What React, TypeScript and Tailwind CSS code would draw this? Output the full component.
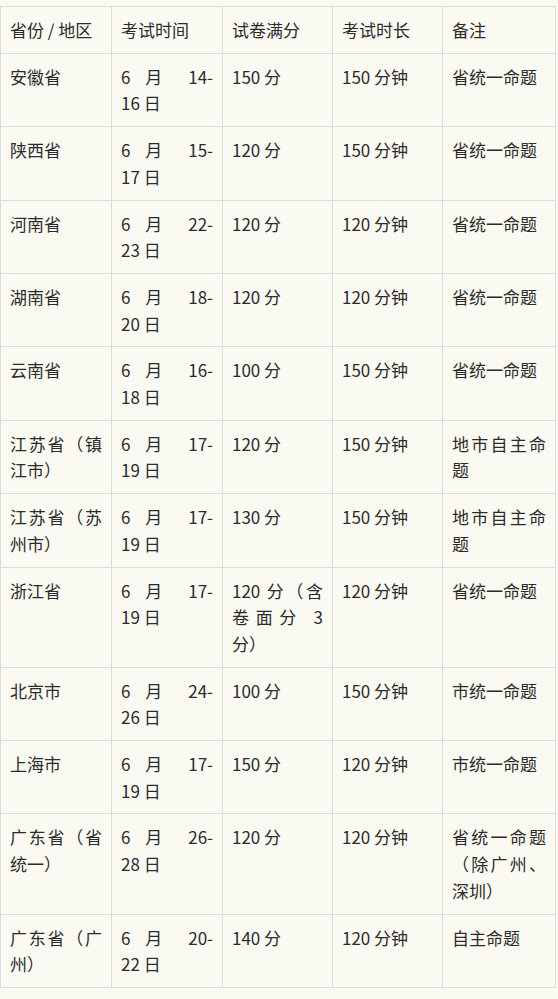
type Row = {
  region: string
  date: [string, string]
  score: string
  duration: string
  note: string
}

const rows: Row[] = [
  { region: '安徽省', date: ['6 月 14-', '16 日'], score: '150 分', duration: '150 分钟', note: '省统一命题' },
  { region: '陕西省', date: ['6 月 15-', '17 日'], score: '120 分', duration: '150 分钟', note: '省统一命题' },
  { region: '河南省', date: ['6 月 22-', '23 日'], score: '120 分', duration: '120 分钟', note: '省统一命题' },
  { region: '湖南省', date: ['6 月 18-', '20 日'], score: '120 分', duration: '120 分钟', note: '省统一命题' },
  { region: '云南省', date: ['6 月 16-', '18 日'], score: '100 分', duration: '150 分钟', note: '省统一命题' },
  { region: '江苏省（镇江市）', date: ['6 月 17-', '19 日'], score: '120 分', duration: '150 分钟', note: '地市自主命题' },
  { region: '江苏省（苏州市）', date: ['6 月 17-', '19 日'], score: '130 分', duration: '150 分钟', note: '地市自主命题' },
  { region: '浙江省', date: ['6 月 17-', '19 日'], score: '120 分（含卷面分 3 分）', duration: '120 分钟', note: '省统一命题' },
  { region: '北京市', date: ['6 月 24-', '26 日'], score: '100 分', duration: '150 分钟', note: '市统一命题' },
  { region: '上海市', date: ['6 月 17-', '19 日'], score: '150 分', duration: '120 分钟', note: '市统一命题' },
  { region: '广东省（省统一）', date: ['6 月 26-', '28 日'], score: '120 分', duration: '120 分钟', note: '省统一命题（除广州、深圳）' },
  { region: '广东省（广州）', date: ['6 月 20-', '22 日'], score: '140 分', duration: '120 分钟', note: '自主命题' },
]

const headers = ['省份 / 地区', '考试时间', '试卷满分', '考试时长', '备注']

const cell =
  'border border-[#dcdcdc] px-[9px] pt-[10px] pb-[9px] align-top text-justify break-all'

export default function App() {
  return (
    <div
      className="min-h-[999px] w-full bg-[#fbfaf2] pt-[6px] text-[17px] leading-[26.7px] text-[#2b2b2b]"
      style={{ fontFamily: '"Noto Sans CJK SC", "Noto Sans", sans-serif' }}
    >
      <table className="w-[555px] table-fixed border-collapse">
        <colgroup>
          <col className="w-[111px]" />
          <col className="w-[111px]" />
          <col className="w-[110px]" />
          <col className="w-[110px]" />
          <col className="w-[113px]" />
        </colgroup>
        <thead>
          <tr>
            {headers.map((h) => (
              <th key={h} className={`${cell} text-left font-normal`}>
                {h}
              </th>
            ))}
          </tr>
        </thead>
        <tbody>
          {rows.map((r, i) => (
            <tr key={i}>
              <td className={cell}>{r.region}</td>
              <td className={cell}>
                <span className="block [text-align-last:justify]">{r.date[0]}</span>
                {r.date[1]}
              </td>
              <td className={cell}>{r.score}</td>
              <td className={cell}>{r.duration}</td>
              <td className={cell}>{r.note}</td>
            </tr>
          ))}
        </tbody>
      </table>
    </div>
  )
}
